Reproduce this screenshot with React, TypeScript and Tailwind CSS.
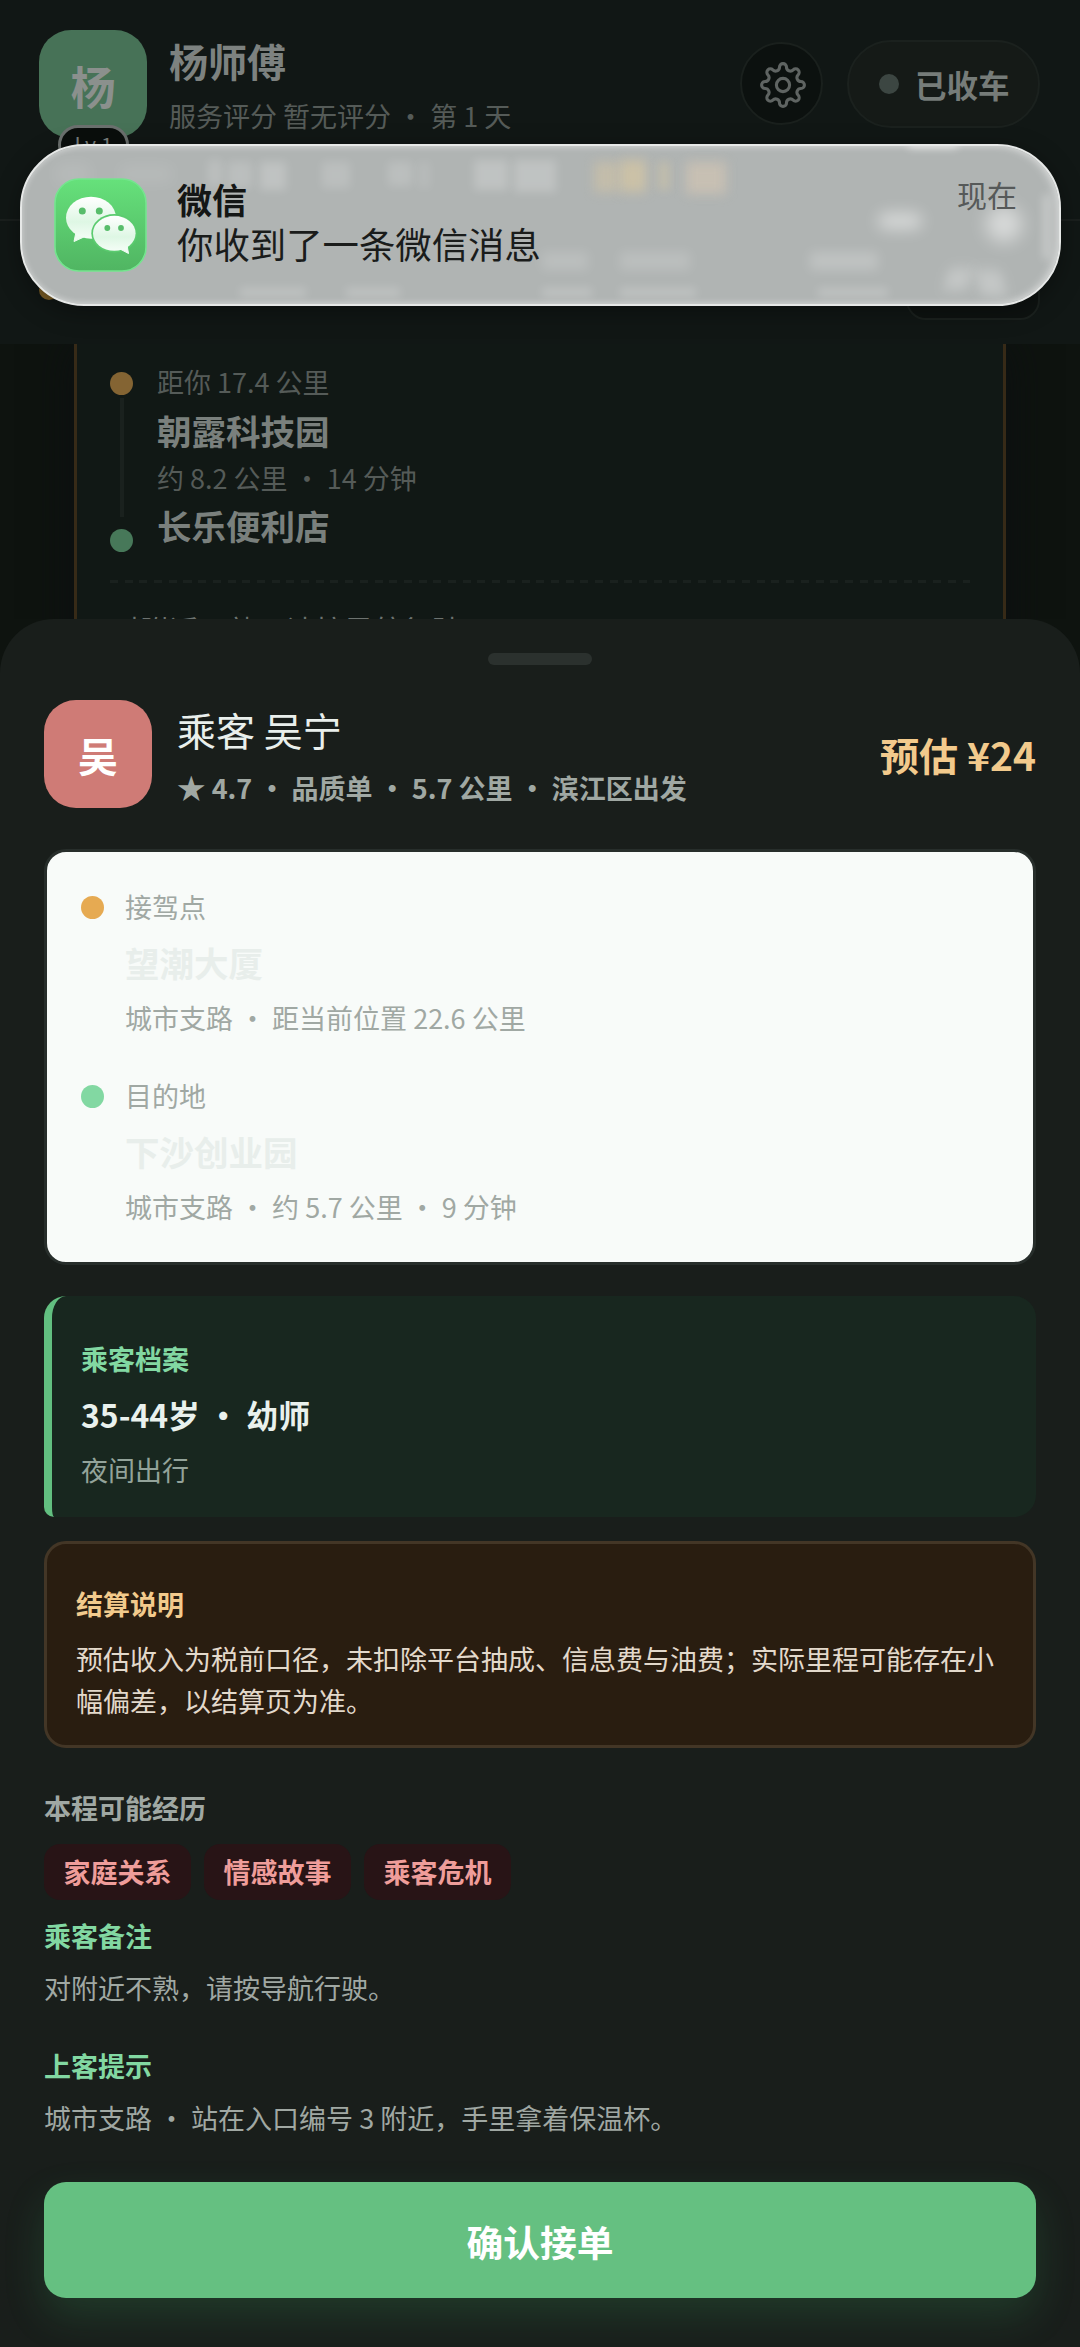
import React from 'react';

interface Stop {
  label: string;
  name: string;
  detail: string;
  dot: string;
}

const stops: Stop[] = [
  { label: '接驾点', name: '望潮大厦', detail: '城市支路 · 距当前位置 22.6 公里', dot: 'bg-[#e6aa52]' },
  { label: '目的地', name: '下沙创业园', detail: '城市支路 · 约 5.7 公里 · 9 分钟', dot: 'bg-[#82d8a2]' },
];

const tags = ['家庭关系', '情感故事', '乘客危机'];

// soft shapes that shine through the glass banner
const glows = [
  'left-[34px] top-[18px] w-[34px] h-[20px] bg-white/10 blur-[8px]',
  'left-[98px] top-[20px] w-[52px] h-[16px] bg-white/10 blur-[8px]',
  'left-[186px] top-[14px] w-[14px] h-[26px] bg-white/15 blur-[5px]',
  'left-[206px] top-[16px] w-[24px] h-[26px] bg-white/15 blur-[5px]',
  'left-[238px] top-[16px] w-[26px] h-[28px] bg-white/20 blur-[5px]',
  'left-[300px] top-[16px] w-[28px] h-[26px] bg-white/15 blur-[5px]',
  'left-[366px] top-[16px] w-[24px] h-[24px] bg-white/15 blur-[5px]',
  'left-[396px] top-[16px] w-[12px] h-[26px] bg-white/10 blur-[5px]',
  'left-[452px] top-[14px] w-[34px] h-[30px] bg-white/20 blur-[5px]',
  'left-[492px] top-[14px] w-[42px] h-[32px] bg-white/20 blur-[5px]',
  'left-[572px] top-[16px] w-[24px] h-[30px] bg-[#e8cf9c]/35 blur-[6px]',
  'left-[598px] top-[14px] w-[26px] h-[32px] bg-[#e8cf9c]/50 blur-[6px]',
  'left-[636px] top-[16px] w-[12px] h-[28px] bg-[#e8cf9c]/30 blur-[5px]',
  'left-[664px] top-[16px] w-[40px] h-[32px] bg-[#ead2b4]/40 blur-[6px]',
  'left-[520px] top-[106px] w-[46px] h-[18px] bg-white/15 blur-[6px]',
  'left-[598px] top-[106px] w-[70px] h-[18px] bg-white/15 blur-[6px]',
  'left-[788px] top-[106px] w-[68px] h-[18px] bg-white/20 blur-[6px]',
  'left-[218px] top-[142px] w-[66px] h-[9px] bg-white/20 blur-[5px]',
  'left-[324px] top-[142px] w-[54px] h-[9px] bg-white/20 blur-[5px]',
  'left-[520px] top-[142px] w-[50px] h-[9px] bg-white/20 blur-[5px]',
  'left-[598px] top-[142px] w-[76px] h-[9px] bg-white/20 blur-[5px]',
  'left-[796px] top-[142px] w-[70px] h-[9px] bg-white/20 blur-[5px]',
  'left-[856px] top-[67px] w-[44px] h-[16px] rounded-full bg-white/50 blur-[8px]',
  'left-[964px] top-[60px] w-[36px] h-[36px] rounded-full bg-white/50 blur-[9px]',
  'left-[924px] top-[122px] w-[24px] h-[22px] -skew-x-12 bg-white/25 blur-[6px]',
  'left-[956px] top-[124px] w-[26px] h-[26px] skew-x-12 bg-white/25 blur-[6px]',
  'left-[886px] -top-[5px] w-[50px] h-[7px] rounded-full bg-white/60 blur-[4px]',
  'left-[1022px] top-[48px] w-[6px] h-[66px] rounded-full bg-white/40 blur-[5px]',
];

// eight round teeth: a half circle on each tip, a shallow arc in each valley
const gearPath = Array.from({ length: 8 }, (_, i) => {
  const at = (x: number, y: number, turn: number) => {
    const a = (turn * Math.PI) / 4;
    return `${(x * Math.cos(a) - y * Math.sin(a)).toFixed(2)} ${(x * Math.sin(a) + y * Math.cos(a)).toFixed(2)}`;
  };
  return `${i === 0 ? `M${at(-3.5, -17.9, 0)}` : ''} A3.5 3.5 0 0 1 ${at(3.5, -17.9, i)} A3.9 3.9 0 0 0 ${at(-3.5, -17.9, i + 1)}`;
}).join(' ') + 'Z';

const GearIcon: React.FC = () => (
  <svg width="46" height="46" viewBox="-23 -23 46 46" fill="none" stroke="#5f6462" strokeWidth="3.1" strokeLinejoin="round">
    <path d={gearPath} />
    <circle r="6.6" />
  </svg>
);

const WeChatIcon: React.FC = () => (
  <svg width="93" height="94" viewBox="0 0 93 94" className="shrink-0">
    <defs>
      <linearGradient id="tile" x1="0" y1="0" x2="0" y2="1">
        <stop offset="0" stopColor="#66e17b" />
        <stop offset="1" stopColor="#50b562" />
      </linearGradient>
      <linearGradient id="bubble" x1="0" y1="0" x2="0" y2="1">
        <stop offset="0" stopColor="#ffffff" />
        <stop offset="0.6" stopColor="#def7e4" />
        <stop offset="1" stopColor="#f4fdf6" />
      </linearGradient>
    </defs>
    <rect x="1" y="1" width="91" height="92" rx="24" fill="url(#tile)" stroke="#74e58e" strokeWidth="1.6" />
    <path d="M22 54 L20 63.5 L31 58.5 Z" fill="#ecfbf0" stroke="#ecfbf0" strokeLinejoin="round" />
    <ellipse cx="37" cy="39.7" rx="25" ry="21" fill="url(#bubble)" />
    <ellipse cx="60.3" cy="55.3" rx="23" ry="19.2" fill="#5bcb6f" />
    <path d="M66 71 L74.5 75.5 L73 67 Z" fill="#f1fcf4" stroke="#f1fcf4" strokeLinejoin="round" />
    <ellipse cx="60.3" cy="55.3" rx="21.3" ry="17.5" fill="url(#bubble)" />
    <g fill="#58bd6b">
      <circle cx="28.3" cy="33" r="3.5" />
      <circle cx="45.3" cy="33" r="3.5" />
      <circle cx="53.3" cy="50" r="2.9" />
      <circle cx="67" cy="50" r="2.9" />
    </g>
  </svg>
);

const Banner: React.FC = () => (
  <div className="absolute left-[20px] top-[144px] w-[1041px] h-[162px] rounded-[64px] overflow-hidden bg-[#b0b4b3] border-2 border-[#e6e8e7] shadow-[0_6px_24px_rgba(0,0,0,0.35)]">
    {glows.map((g) => (
      <div key={g} className={`absolute ${g}`} />
    ))}
    <div className="absolute inset-0 rounded-[62px] shadow-[inset_0_0_6px_rgba(255,255,255,0.35),inset_-4px_0_8px_rgba(255,255,255,0.3)]" />
    <div className="relative flex pl-8 pr-[42px] pt-8">
      <WeChatIcon />
      <div className="pl-[30px] pt-px">
        <div className="text-[35px] leading-[40px] font-bold text-[#141615]">微信</div>
        <div className="text-[36.4px] leading-[48px] text-[#1a1c1b]">你收到了一条微信消息</div>
      </div>
      <div className="ml-auto text-[30px] leading-[33px] text-[#565959]">现在</div>
    </div>
  </div>
);

const Header: React.FC = () => (
  <header className="h-[344px] shrink-0 bg-[#111715] flex flex-col">
    <div className="h-[221px] pl-[39px] pr-10 pt-[29px] border-b-2 border-[#1a1f1d]">
      <div className="flex items-center h-[109px]">
        <div className="relative w-[108px] h-[108px] rounded-[32px] bg-[#477257] flex justify-center pt-[29px]">
          <span className="text-[45px] leading-[54px] font-bold text-[#8b908d]">杨</span>
          <span className="absolute left-[19px] top-[95px] w-[71px] h-[40px] rounded-[20px] border-[3px] border-[#6b706e] bg-[#0a0e0c] text-center text-[21px] leading-[32px] text-[#7b807e]">
            Lv.1
          </span>
        </div>
        <div className="pl-[22px] h-full pt-2">
          <div className="text-[39px] leading-[47px] font-bold text-[#7d8280]">杨师傅</div>
          <div className="mt-3 text-[27px] leading-[40px] text-[#555b58]">服务评分 暂无评分 · 第 1 天</div>
        </div>
        <div className="ml-auto w-[83px] h-[83px] rounded-full border-2 border-[#1a201d] bg-[#0c110f] flex items-center justify-center pl-0.5 pt-0.5">
          <GearIcon />
        </div>
        <div className="ml-6 w-[193px] h-[88px] rounded-full border-2 border-[#1b211e] bg-[#151a17] flex items-center pl-[30px]">
          <span className="w-5 h-5 rounded-full bg-[#3c4642]" />
          <span className="pl-4 text-[31.5px] leading-[40px] font-bold text-[#767c79]">已收车</span>
        </div>
      </div>
    </div>
    <div className="flex justify-between pl-[39px] pr-10 pt-[27px]">
      <span className="mt-[32px] w-5 h-5 rounded-full bg-[#7d5f27]" />
      <span className="w-[134px] h-[72px] rounded-[20px] border-2 border-[#1b211e] bg-[#0e1311]" />
    </div>
  </header>
);

const NearbyOrder: React.FC = () => (
  <div className="h-[275px] shrink-0 overflow-hidden px-[74px]">
    <div className="h-[400px] border-x-[3px] border-[#372a17] bg-[#111815] px-[33px] pt-[13px] shadow-[0_0_40px_rgba(12,14,18,0.9)]">
      <div className="flex">
        <div className="w-[23px] pt-[15px] flex flex-col items-center">
          <span className="w-[23px] h-[23px] rounded-full bg-[#846433]" />
          <span className="mt-[3px] w-1 h-[119px] bg-[#1a211e]" />
          <span className="mt-3 w-[23px] h-[23px] rounded-full bg-[#477859]" />
        </div>
        <div className="pl-6">
          <div className="text-[27px] leading-[49px] text-[#555b58]">距你 17.4 公里</div>
          <div className="text-[34.5px] leading-[48px] font-bold text-[#7a807d]">朝露科技园</div>
          <div className="text-[27px] leading-[47px] text-[#555b58]">约 8.2 公里 · 14 分钟</div>
          <div className="text-[34.5px] leading-[49px] font-bold text-[#7a807d]">长乐便利店</div>
        </div>
      </div>
      <div className="mt-[28px] h-[3px] w-[860px] bg-[repeating-linear-gradient(90deg,#1a211e_0_8px,transparent_8px_14.7px)]" />
      <div className="mt-[26px] pl-px text-[29.2px] leading-[40px] text-[#6d7370]">对附近不熟，请按导航行驶。</div>
    </div>
  </div>
);

export default function App() {
  return (
    <div className="relative w-[1080px] h-[2347px] overflow-hidden flex flex-col bg-[#0e130f] font-['Noto_Sans_CJK_SC',sans-serif]">
      <Header />
      <NearbyOrder />

      {/* Order sheet */}
      <section className="flex-1 relative rounded-t-[54px] bg-[#191e1b] px-[44px] pt-[34px] text-[27px] leading-[40px] text-[#a0a8a3]">
        <div className="mx-auto w-[104px] h-3 rounded-[6px] bg-[#2b312e]" />

        <div className="mt-[35px] flex h-[108px]">
          <div className="w-[108px] h-[108px] rounded-[32px] bg-[#cf7b76] text-white text-[40px] leading-[111px] font-bold text-center">吴</div>
          <div className="pl-[25px] pt-1">
            <div className="text-[39px] leading-[50px] text-[#e9efec]">乘客 吴宁</div>
            <div className="mt-[15px] leading-[36px] font-bold">
              <span className="text-[28.5px]">★</span> 4.7 · 品质单 · 5.7 公里 · 滨江区出发
            </div>
          </div>
          <div className="ml-auto text-[39px] leading-[108px] font-bold text-[#f2ca8c]">预估 ¥24</div>
        </div>

        <div className="mt-[41px] h-[416px] rounded-[22px] border-[3px] border-[#272e2b] bg-[#f8fbf9] pl-[34px] pt-[35px] flex flex-col gap-[38px]">
          {stops.map((s) => (
            <div key={s.label} className="flex">
              <span className={`mt-[9px] w-[23px] h-[23px] rounded-full ${s.dot}`} />
              <div className="pl-[21px]">
                <div>{s.label}</div>
                <div className="mt-[10px] text-[34.5px] leading-[50px] font-bold text-[#e8eeeb]">{s.name}</div>
                <div className="mt-[11px]">{s.detail}</div>
              </div>
            </div>
          ))}
        </div>

        <div className="mt-[31px] h-[221px] rounded-[22px] rounded-bl-[10px] border-l-8 border-[#62bf80] bg-[#18271f] pl-[29px] pt-[43px]">
          <div className="font-bold text-[#82d8a2]">乘客档案</div>
          <div className="mt-[11px] text-[31.9px] leading-[48px] font-bold text-[#e9f1ed]">35-44岁 · 幼师</div>
          <div className="mt-3 text-[#93a39a]">夜间出行</div>
        </div>

        <div className="mt-[24px] h-[207px] rounded-[22px] border-[3px] border-[#433626] bg-[#291d10] px-[29px] pt-10">
          <div className="font-bold text-[#f2ca8c]">结算说明</div>
          <p className="mt-[14px] leading-[42px] text-[#e3d9cb]">
            预估收入为税前口径，未扣除平台抽成、信息费与油费；实际里程可能存在小幅偏差，以结算页为准。
          </p>
        </div>

        <div className="mt-[40px] font-bold">本程可能经历</div>
        <div className="mt-4 flex gap-[13px]">
          {tags.map((t) => (
            <span key={t} className="w-[147px] h-14 rounded-[16px] bg-[#281416] text-center leading-[56px] font-bold text-[#ef9d9a]">
              {t}
            </span>
          ))}
        </div>

        <div className="mt-4 font-bold text-[#82d8a2]">乘客备注</div>
        <div className="mt-3">对附近不熟，请按导航行驶。</div>
        <div className="mt-[38px] font-bold text-[#82d8a2]">上客提示</div>
        <div className="mt-3">城市支路 · 站在入口编号 3 附近，手里拿着保温杯。</div>

        <button className="mt-[44px] block w-full h-[116px] rounded-[22px] bg-[#65c081] pt-px text-[36.8px] font-bold text-white shadow-[0_18px_40px_rgba(60,170,100,0.2)]">
          确认接单
        </button>
      </section>

      <Banner />
    </div>
  );
}
